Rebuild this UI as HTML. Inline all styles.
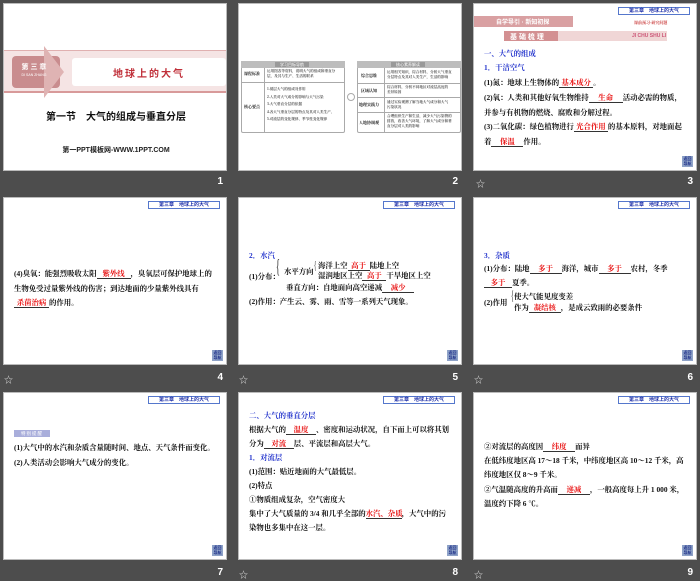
<!DOCTYPE html>
<html><head><meta charset="utf-8">
<style>
*{margin:0;padding:0;box-sizing:border-box}
body{width:700px;height:577px;background:#4d4d4d;position:relative;overflow:hidden;font-family:"Liberation Sans","Noto Sans CJK SC",sans-serif}
.s{position:absolute;width:224px;height:168px;background:#fff;overflow:hidden;border:1px solid #bbb}
.n{position:absolute;color:#fff;font-size:10px;font-weight:bold;width:20px;text-align:right}
.st{position:absolute;color:#ddd;font-size:9px}
.a{position:absolute;white-space:nowrap;font-size:7.4px;color:#111;font-weight:bold;font-family:"Liberation Serif","Noto Serif CJK SC",serif}
.b{color:#2233cc}
.r{color:#e81010;border-bottom:1px solid #333;display:inline-block;text-align:center;line-height:8px}
.tab{position:absolute;left:144px;top:3px;width:72px;height:8px;border:1px solid #5577cc;font-size:5px;color:#2233aa;font-weight:bold;text-align:center;line-height:6px}
.ic{position:absolute;right:3px;bottom:3px;width:11px;height:11px;background:#8fa3c8;color:#1d2f88;font-size:4px;line-height:5px;text-align:center;font-weight:bold}
</style></head><body>

<!-- slide 1 -->
<div class="s" style="left:3px;top:3px">
  <div style="position:absolute;left:0;top:46px;width:224px;height:43px;background:#f5e4e4;border-top:1px solid #e0b0b0;border-bottom:2px solid #d89a9a"></div>
  <div style="position:absolute;left:8px;top:52px;width:48px;height:32px;background:#c98c8e;border-radius:4px"></div>
  <div style="position:absolute;left:40px;top:42px;width:0;height:0;border-top:26px solid transparent;border-bottom:26px solid transparent;border-left:20px solid #dfb3b3"></div>
  <div style="position:absolute;left:10px;top:58px;color:#fff;font-size:7px;font-weight:bold;width:40px;text-align:center">第 三 章</div>
  <div style="position:absolute;left:10px;top:69px;color:#fff;font-size:3.5px;width:40px;text-align:center">DI SAN ZHANG</div>
  <div style="position:absolute;left:68px;top:54px;width:154px;height:28px;background:#fff;border-radius:3px"></div>
  <div style="position:absolute;left:68px;top:61px;width:154px;text-align:center;color:#c0303a;font-size:10px;font-weight:bold;letter-spacing:2px">地球上的大气</div>
  <div style="position:absolute;left:0;top:104px;width:224px;text-align:center;font-size:10px;font-weight:bold;color:#111">第一节　大气的组成与垂直分层</div>
  <div style="position:absolute;left:0;top:141px;width:224px;text-align:center;font-size:7px;font-weight:bold;color:#222">第一PPT模板网-WWW.1PPT.COM</div>
</div>
<div class="n" style="left:203px;top:176px">1</div>

<!-- slide 2 -->
<div class="s" style="left:238px;top:3px">
  <div style="position:absolute;left:2px;top:57px;width:104px;height:72px;border:1px solid #aaa;border-radius:2px"></div>
  <div style="position:absolute;left:2px;top:57px;width:104px;height:7px;background:#bdbdbd"></div>
  <div style="position:absolute;left:36px;top:58px;width:34px;height:5px;background:#999;color:#fff;font-size:4px;text-align:center;line-height:5px">学习目标导航</div>
  <div style="position:absolute;left:2px;top:78px;width:104px;border-top:1px solid #aaa"></div>
  <div style="position:absolute;left:25px;top:64px;height:65px;border-left:1px solid #aaa"></div>
  <div class="a" style="left:5px;top:67px;font-size:4px">课程标准</div>
  <div class="a" style="left:5px;top:100px;font-size:4px">核心要点</div>
  <div class="a" style="left:28px;top:65px;font-size:3.6px;line-height:5px;color:#555">运用图表等资料，说明大气的组成和垂直分<br>层，及其与生产、生活的联系</div>
  <div class="a" style="left:28px;top:82px;font-size:3.6px;line-height:7.5px;color:#555">1.低层大气的组成及作用<br>2.人类对大气成分的影响与大气污染<br>3.大气垂直分层的依据<br>4.各大气垂直分层的特点及其对人类生产、<br>5.对流层的变化规律、季节性变化规律</div>
  <div style="position:absolute;left:108px;top:89px;width:8px;height:8px;border:1px solid #aaa;border-radius:50%"></div>
  <div style="position:absolute;left:118px;top:57px;width:104px;height:72px;border:1px solid #aaa;border-radius:2px"></div>
  <div style="position:absolute;left:118px;top:57px;width:104px;height:7px;background:#bdbdbd"></div>
  <div style="position:absolute;left:152px;top:58px;width:34px;height:5px;background:#999;color:#fff;font-size:4px;text-align:center;line-height:5px">核心素养解读</div>
  <div style="position:absolute;left:118px;top:79px;width:104px;border-top:1px solid #aaa"></div>
  <div style="position:absolute;left:118px;top:93px;width:104px;border-top:1px solid #aaa"></div>
  <div style="position:absolute;left:118px;top:108px;width:104px;border-top:1px solid #aaa"></div>
  <div style="position:absolute;left:145px;top:64px;height:65px;border-left:1px solid #aaa"></div>
  <div class="a" style="left:122px;top:69px;font-size:4px">综合思维</div>
  <div class="a" style="left:122px;top:84px;font-size:4px">区域认知</div>
  <div class="a" style="left:120px;top:98px;font-size:4px">地理实践力</div>
  <div class="a" style="left:120px;top:116px;font-size:4px">人地协调观</div>
  <div class="a" style="left:148px;top:66px;font-size:3.6px;line-height:5px;color:#555">运用相关知识，综合材料，分析大气垂直<br>分层特点及其对人类生产，生活的影响</div>
  <div class="a" style="left:148px;top:81px;font-size:3.6px;line-height:5px;color:#555">综合材料，分析不同地区对流层高度的<br>差异原因</div>
  <div class="a" style="left:148px;top:96px;font-size:3.6px;line-height:5px;color:#555">通过实验观测了解当地大气成分和大气<br>污染状况</div>
  <div class="a" style="left:148px;top:110px;font-size:3.6px;line-height:5px;color:#555">合理组织生产和生活，减少大气污染物的<br>排放，改善大气环境，了解大气成分和垂<br>直分层对人类的影响</div>
</div>
<div class="n" style="left:438px;top:176px">2</div>

<!-- slide 3 -->
<div class="s" style="left:473px;top:3px">
  <div class="tab">第三章　地球上的大气</div>
  <div style="position:absolute;left:0;top:12px;width:99px;height:11px;background:#d9a0a2"></div>
  <div style="position:absolute;left:22px;top:13px;color:#fff;font-size:6px;font-weight:bold">自学导引 · 新知初探</div>
  <div class="a" style="left:160px;top:16px;font-size:4px;color:#c44">课前预习·研究问题</div>
  <div style="position:absolute;left:30px;top:27px;width:163px;height:10px;background:#f0d6d6"></div>
  <div style="position:absolute;left:30px;top:27px;width:54px;height:10px;background:#d39092"></div>
  <div style="position:absolute;left:36px;top:28px;color:#fff;font-size:7px;font-weight:bold">基 础 梳 理</div>
  <div class="a" style="left:158px;top:29px;font-size:5px;color:#c57;font-family:'Liberation Sans'">JI CHU SHU LI</div>
  <div class="a b" style="left:10px;top:44px">一、大气的组成</div>
  <div class="a b" style="left:10px;top:58px">1．干洁空气</div>
  <div class="a" style="left:10px;top:73px">(1)氮：地球上生物体的<span class="r" style="width:34px">基本成分</span>。</div>
  <div class="a" style="left:10px;top:88px">(2)氧：人类和其他好氧生物维持<span class="r" style="width:34px">生命</span>活动必需的物质，</div>
  <div class="a" style="left:10px;top:103px">并参与有机物的燃烧、腐败和分解过程。</div>
  <div class="a" style="left:10px;top:117px">(3)二氧化碳：绿色植物进行<span class="r" style="width:34px">光合作用</span>的基本原料，对地面起</div>
  <div class="a" style="left:10px;top:132px">着<span class="r" style="width:32px">保温</span>作用。</div>
  <div class="ic">返回<br>导航</div>
</div>
<div class="st" style="left:476px;top:177px">☆</div>
<div class="n" style="left:673px;top:176px">3</div>

<!-- slide 4 -->
<div class="s" style="left:3px;top:197px">
  <div class="tab">第三章　地球上的大气</div>
  <div class="a" style="left:10px;top:70px">(4)臭氧：能强烈吸收太阳<span class="r" style="width:34px">紫外线</span>，臭氧层可保护地球上的</div>
  <div class="a" style="left:10px;top:85px">生物免受过量紫外线的伤害；到达地面的少量紫外线具有</div>
  <div class="a" style="left:10px;top:99px"><span class="r" style="width:35px">杀菌治病</span>的作用。</div>
  <div class="ic">返回<br>导航</div>
</div>
<div class="st" style="left:4px;top:373px">☆</div>
<div class="n" style="left:203px;top:372px">4</div>

<!-- slide 5 -->
<div class="s" style="left:238px;top:197px">
  <div class="tab">第三章　地球上的大气</div>
  <div class="a b" style="left:10px;top:52px">2．水汽</div>
  <div class="a" style="left:10px;top:73px">(1)分布：</div>
  <div class="a" style="left:37px;top:58px;font-size:20px;font-weight:normal;transform:scaleX(.4);transform-origin:left">{</div>
  <div class="a" style="left:45px;top:68px">水平方向</div>
  <div class="a" style="left:75px;top:60px;font-size:12px;font-weight:normal;transform:scaleX(.4);transform-origin:left">{</div>
  <div class="a" style="left:79px;top:62px">海洋上空<span class="r" style="width:22px">高于</span>陆地上空</div>
  <div class="a" style="left:79px;top:72px">湿润地区上空<span class="r" style="width:24px">高于</span>干旱地区上空</div>
  <div class="a" style="left:47px;top:84px">垂直方向：自地面向高空递减<span class="r" style="width:32px">减少</span></div>
  <div class="a" style="left:10px;top:98px">(2)作用：产生云、雾、雨、雪等一系列天气现象。</div>
  <div class="ic">返回<br>导航</div>
</div>
<div class="st" style="left:239px;top:373px">☆</div>
<div class="n" style="left:438px;top:372px">5</div>

<!-- slide 6 -->
<div class="s" style="left:473px;top:197px">
  <div class="tab">第三章　地球上的大气</div>
  <div class="a b" style="left:10px;top:52px">3．杂质</div>
  <div class="a" style="left:10px;top:65px">(1)分布：陆地<span class="r" style="width:32px">多于</span>海洋，城市<span class="r" style="width:32px">多于</span>农村，冬季</div>
  <div class="a" style="left:10px;top:79px"><span class="r" style="width:28px">多于</span>夏季。</div>
  <div class="a" style="left:10px;top:99px">(2)作用</div>
  <div class="a" style="left:37px;top:91px;font-size:14px;font-weight:normal;transform:scaleX(.4);transform-origin:left">{</div>
  <div class="a" style="left:40px;top:93px">使大气能见度变差</div>
  <div class="a" style="left:40px;top:104px">作为<span class="r" style="width:32px">凝结核</span>，是成云致雨的必要条件</div>
  <div class="ic">返回<br>导航</div>
</div>
<div class="st" style="left:474px;top:373px">☆</div>
<div class="n" style="left:673px;top:372px">6</div>

<!-- slide 7 -->
<div class="s" style="left:3px;top:392px">
  <div class="tab">第三章　地球上的大气</div>
  <div style="position:absolute;left:10px;top:37px;width:36px;height:7px;background:#a9aedb;color:#fff;font-size:4.5px;line-height:7px;text-align:center;letter-spacing:1px">特别提醒</div>
  <div class="a" style="left:10px;top:49px">(1)大气中的水汽和杂质含量随时间、地点、天气条件而变化。</div>
  <div class="a" style="left:10px;top:64px">(2)人类活动会影响大气成分的变化。</div>
  <div class="ic">返回<br>导航</div>
</div>
<div class="n" style="left:203px;top:567px">7</div>

<!-- slide 8 -->
<div class="s" style="left:238px;top:392px">
  <div class="tab">第三章　地球上的大气</div>
  <div class="a b" style="left:10px;top:17px">二、大气的垂直分层</div>
  <div class="a" style="left:10px;top:31px">根据大气的<span class="r" style="width:30px">温度</span>、密度和运动状况，自下而上可以将其划</div>
  <div class="a" style="left:10px;top:45px">分为<span class="r" style="width:30px">对流</span>层、平流层和高层大气。</div>
  <div class="a b" style="left:10px;top:59px">1．对流层</div>
  <div class="a" style="left:10px;top:73px">(1)范围：贴近地面的大气最低层。</div>
  <div class="a" style="left:10px;top:87px">(2)特点</div>
  <div class="a" style="left:10px;top:101px">①物质组成复杂，空气密度大</div>
  <div class="a" style="left:10px;top:115px">集中了大气质量的 3/4 和几乎全部的<span class="r" style="width:36px">水汽、杂质</span>，大气中的污</div>
  <div class="a" style="left:10px;top:129px">染物也多集中在这一层。</div>
  <div class="ic">返回<br>导航</div>
</div>
<div class="st" style="left:239px;top:568px">☆</div>
<div class="n" style="left:438px;top:567px">8</div>

<!-- slide 9 -->
<div class="s" style="left:473px;top:392px">
  <div class="tab">第三章　地球上的大气</div>
  <div class="a" style="left:10px;top:48px">②对流层的高度因<span class="r" style="width:32px">纬度</span>而异</div>
  <div class="a" style="left:10px;top:62px">在低纬度地区高 17～18 千米，中纬度地区高 10～12 千米，高</div>
  <div class="a" style="left:10px;top:76px">纬度地区仅 8～9 千米。</div>
  <div class="a" style="left:10px;top:91px">②气温随高度的升高而<span class="r" style="width:32px">递减</span>，一般高度每上升 1 000 米，</div>
  <div class="a" style="left:10px;top:105px">温度约下降 6 ℃。</div>
  <div class="ic">返回<br>导航</div>
</div>
<div class="st" style="left:474px;top:568px">☆</div>
<div class="n" style="left:673px;top:567px">9</div>

</body></html>
